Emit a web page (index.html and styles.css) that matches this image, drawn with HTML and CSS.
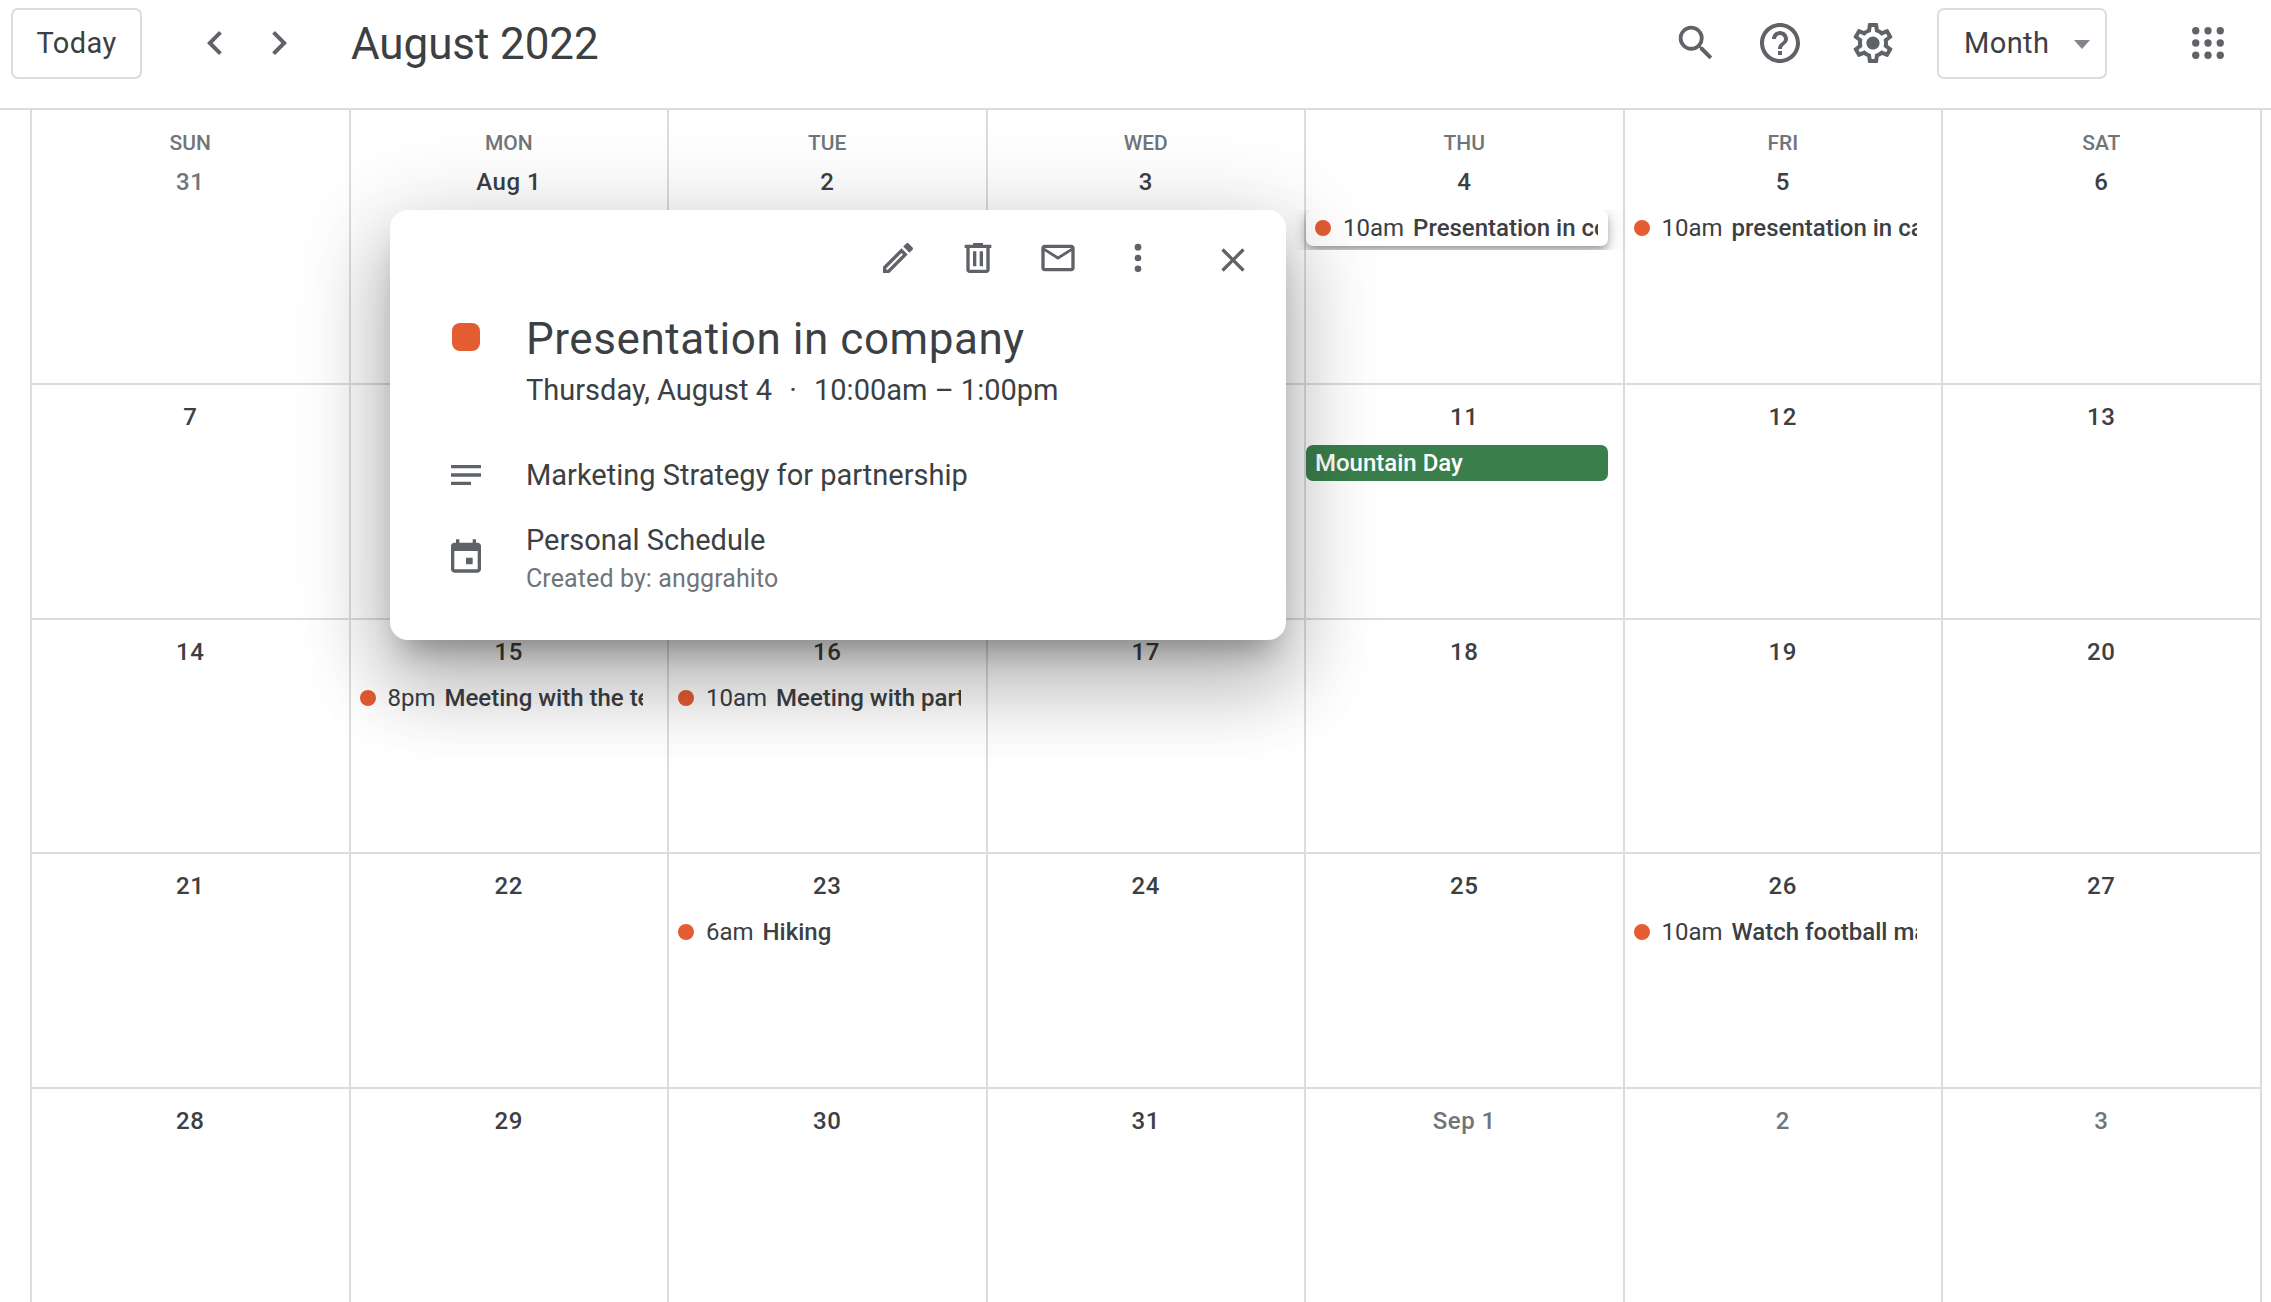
FILE: index.html
```html
<!DOCTYPE html>
<html lang="en">
<head>
    <meta charset="UTF-8">
    <title>August 2022</title>
    <link rel="stylesheet" href="styles.css">
</head>
<body>

    <header class="topbar">
        <button class="btn btn-today">Today</button>
        <div class="nav-arrows">
            <svg class="icon" viewBox="0 0 24 24"><path d="M15.41 7.41L14 6l-6 6 6 6 1.41-1.41L10.83 12z"/></svg>
            <svg class="icon" viewBox="0 0 24 24"><path d="M10 6L8.59 7.41 13.17 12l-4.58 4.59L10 18l6-6z"/></svg>
        </div>
        <h1 class="title">August 2022</h1>
        <div class="topbar-right">
            <svg class="icon icon-search" viewBox="0 0 24 24"><path d="M15.5 14h-.79l-.28-.27A6.471 6.471 0 0 0 16 9.5 6.5 6.5 0 1 0 9.5 16c1.61 0 3.09-.59 4.23-1.57l.27.28v.79l5 4.99L20.49 19l-4.99-5zm-6 0C7.01 14 5 11.99 5 9.5S7.01 5 9.5 5 14 7.01 14 9.5 11.99 14 9.5 14z"/></svg>
            <svg class="icon icon-help" viewBox="0 0 24 24"><path d="M11 18h2v-2h-2v2zm1-16C6.48 2 2 6.48 2 12s4.48 10 10 10 10-4.48 10-10S17.52 2 12 2zm0 18c-4.41 0-8-3.59-8-8s3.59-8 8-8 8 3.59 8 8-3.59 8-8 8zm0-14c-2.21 0-4 1.79-4 4h2c0-1.1.9-2 2-2s2 .9 2 2c0 2-3 1.75-3 5h2c0-2.25 3-2.5 3-5 0-2.21-1.79-4-4-4z"/></svg>
            <svg class="icon icon-gear" viewBox="0 0 24 24"><path d="M19.43 12.98c.04-.32.07-.64.07-.98 0-.34-.03-.66-.07-.98l2.11-1.65c.19-.15.24-.42.12-.64l-2-3.46c-.09-.16-.26-.25-.44-.25-.06 0-.12.01-.17.03l-2.49 1c-.52-.4-1.08-.73-1.69-.98l-.38-2.65C14.46 2.18 14.25 2 14 2h-4c-.25 0-.46.18-.49.42l-.38 2.65c-.61.25-1.17.59-1.69.98l-2.49-1c-.06-.02-.12-.03-.18-.03-.17 0-.34.09-.43.25l-2 3.46c-.13.22-.07.49.12.64l2.11 1.65c-.04.32-.07.65-.07.98 0 .33.03.66.07.98l-2.11 1.65c-.19.15-.24.42-.12.64l2 3.46c.09.16.26.25.44.25.06 0 .12-.01.17-.03l2.49-1c.52.4 1.08.73 1.69.98l.38 2.65c.03.24.24.42.49.42h4c.25 0 .46-.18.49-.42l.38-2.65c.61-.25 1.17-.59 1.69-.98l2.49 1c.06.02.12.03.18.03.17 0 .34-.09.43-.25l2-3.46c.12-.22.07-.49-.12-.64l-2.11-1.65zm-1.98-1.71c.04.31.05.52.05.73 0 .21-.02.43-.05.73l-.14 1.13.89.7 1.08.84-.7 1.21-1.27-.51-1.04-.42-.9.68c-.43.32-.84.56-1.25.73l-1.06.43-.16 1.13-.2 1.35h-1.4l-.19-1.35-.16-1.13-1.06-.43c-.43-.18-.83-.41-1.23-.71l-.91-.7-1.06.43-1.27.51-.7-1.21 1.08-.84.89-.7-.14-1.13c-.03-.31-.05-.54-.05-.74s.02-.43.05-.73l.14-1.13-.89-.7-1.08-.84.7-1.21 1.27.51 1.04.42.9-.68c.43-.32.84-.56 1.25-.73l1.06-.43.16-1.13.2-1.35h1.39l.19 1.35.16 1.13 1.06.43c.43.18.83.41 1.23.71l.91.7 1.06-.43 1.27-.51.7 1.21-1.07.85-.89.7.14 1.13zM12 8.7c-1.82 0-3.3 1.48-3.3 3.3s1.48 3.3 3.3 3.3 3.3-1.48 3.3-3.3-1.48-3.3-3.3-3.3z"/></svg>
            <button class="btn btn-month">Month <span class="caret"></span></button>
            <svg class="icon icon-apps" viewBox="0 0 24 24"><circle cx="5" cy="5" r="2.1"/><circle cx="12" cy="5" r="2.1"/><circle cx="19" cy="5" r="2.1"/><circle cx="5" cy="12" r="2.1"/><circle cx="12" cy="12" r="2.1"/><circle cx="19" cy="12" r="2.1"/><circle cx="5" cy="19" r="2.1"/><circle cx="12" cy="19" r="2.1"/><circle cx="19" cy="19" r="2.1"/></svg>
        </div>
    </header>

    <main class="month">
        <!-- week 1 -->
        <div class="cell cell-first"><div class="dow">SUN</div><div class="date muted">31</div></div>
        <div class="cell cell-first"><div class="dow">MON</div><div class="date">Aug 1</div></div>
        <div class="cell cell-first"><div class="dow">TUE</div><div class="date">2</div></div>
        <div class="cell cell-first"><div class="dow">WED</div><div class="date">3</div></div>
        <div class="cell cell-first"><div class="dow">THU</div><div class="date">4</div>
            <div class="event event-active"><span class="dot"></span><span class="time">10am</span><b>Presentation in company</b></div>
        </div>
        <div class="cell cell-first"><div class="dow">FRI</div><div class="date">5</div>
            <div class="event"><span class="dot"></span><span class="time">10am</span><b>presentation in cafe</b></div>
        </div>
        <div class="cell cell-first"><div class="dow">SAT</div><div class="date">6</div></div>

        <!-- week 2 -->
        <div class="cell"><div class="date">7</div></div>
        <div class="cell"><div class="date">8</div></div>
        <div class="cell"><div class="date">9</div></div>
        <div class="cell"><div class="date">10</div></div>
        <div class="cell"><div class="date">11</div>
            <div class="event event-holiday">Mountain Day</div>
        </div>
        <div class="cell"><div class="date">12</div></div>
        <div class="cell"><div class="date">13</div></div>

        <!-- week 3 -->
        <div class="cell"><div class="date">14</div></div>
        <div class="cell"><div class="date">15</div>
            <div class="event"><span class="dot"></span><span class="time">8pm</span><b>Meeting with the team</b></div>
        </div>
        <div class="cell"><div class="date">16</div>
            <div class="event"><span class="dot"></span><span class="time">10am</span><b>Meeting with partner</b></div>
        </div>
        <div class="cell"><div class="date">17</div></div>
        <div class="cell"><div class="date">18</div></div>
        <div class="cell"><div class="date">19</div></div>
        <div class="cell"><div class="date">20</div></div>

        <!-- week 4 -->
        <div class="cell"><div class="date">21</div></div>
        <div class="cell"><div class="date">22</div></div>
        <div class="cell"><div class="date">23</div>
            <div class="event"><span class="dot"></span><span class="time">6am</span><b>Hiking</b></div>
        </div>
        <div class="cell"><div class="date">24</div></div>
        <div class="cell"><div class="date">25</div></div>
        <div class="cell"><div class="date">26</div>
            <div class="event"><span class="dot"></span><span class="time">10am</span><b>Watch football match</b></div>
        </div>
        <div class="cell"><div class="date">27</div></div>

        <!-- week 5 -->
        <div class="cell cell-last"><div class="date">28</div></div>
        <div class="cell cell-last"><div class="date">29</div></div>
        <div class="cell cell-last"><div class="date">30</div></div>
        <div class="cell cell-last"><div class="date">31</div></div>
        <div class="cell cell-last"><div class="date muted">Sep 1</div></div>
        <div class="cell cell-last"><div class="date muted">2</div></div>
        <div class="cell cell-last"><div class="date muted">3</div></div>
    </main>

    <section class="popup">
        <div class="popup-actions">
            <svg class="icon" viewBox="0 0 24 24"><path d="M3 17.25V21h3.75L17.81 9.94l-3.75-3.75L3 17.25zM5.92 19H5v-.92l9.06-9.06.92.92L5.92 19zM20.71 5.63l-2.34-2.34c-.2-.2-.45-.29-.71-.29s-.51.1-.7.29l-1.83 1.83 3.75 3.75 1.83-1.83c.39-.39.39-1.02 0-1.41z"/></svg>
            <svg class="icon" viewBox="0 0 24 24"><path d="M15 4V3H9v1H4v2h1v13c0 1.1.9 2 2 2h10c1.1 0 2-.9 2-2V6h1V4h-5zm2 15H7V6h10v13zM9 8h2v9H9zm4 0h2v9h-2z"/></svg>
            <svg class="icon" viewBox="0 0 24 24"><path d="M22 6c0-1.1-.9-2-2-2H4c-1.1 0-2 .9-2 2v12c0 1.1.9 2 2 2h16c1.1 0 2-.9 2-2V6zm-2 0l-8 5-8-5h16zm0 12H4V8l8 5 8-5v10z"/></svg>
            <svg class="icon" viewBox="0 0 24 24"><circle cx="12" cy="5.5" r="2"/><circle cx="12" cy="12" r="2"/><circle cx="12" cy="18.5" r="2"/></svg>
            <svg class="icon icon-close" viewBox="0 0 24 24"><path d="M19 6.41L17.59 5 12 10.59 6.41 5 5 6.41 10.59 12 5 17.59 6.41 19 12 13.41 17.59 19 19 17.59 13.41 12z"/></svg>
        </div>

        <div class="popup-row row-title">
            <div class="row-icon"><span class="swatch"></span></div>
            <div>
                <div class="popup-title">Presentation in company</div>
                <div class="popup-when">Thursday, August 4 <span class="sep">·</span> 10:00am – 1:00pm</div>
            </div>
        </div>

        <div class="popup-row row-notes">
            <div class="row-icon">
                <svg class="icon" viewBox="0 0 24 24"><path d="M3 18h12v-2H3v2zM3 6v2h18V6H3zm0 7h18v-2H3v2z"/></svg>
            </div>
            <div class="popup-text">Marketing Strategy for partnership</div>
        </div>

        <div class="popup-row row-calendar">
            <div class="row-icon">
                <svg class="icon" viewBox="0 0 24 24"><path d="M19 4h-1V2h-2v2H8V2H6v2H5c-1.1 0-2 .9-2 2v14c0 1.1.9 2 2 2h14c1.1 0 2-.9 2-2V6c0-1.1-.9-2-2-2zm0 16H5V9h14v11zM12 13h4v4h-4z"/></svg>
            </div>
            <div>
                <div class="popup-text">Personal Schedule</div>
                <div class="popup-small">Created by: anggrahito</div>
            </div>
        </div>
    </section>

</body>
</html>
```

FILE: styles.css
```css
* {
    box-sizing: border-box;
}
body {
    margin: 0;
    width: 2271px;
    height: 1302px;
    overflow: hidden;
    font-family: Roboto, "Liberation Sans", sans-serif;
    background-color: #fff;
    color: #3c4043;
}
.icon {
    display: block;
    width: 40px;
    height: 40px;
    fill: #5f6368;
    flex: none;
}

/* top bar */
.topbar {
    display: flex;
    align-items: center;
    height: 110px;
    padding: 0 0 22px 11px;
    border-bottom: 2px solid #dadce0;
}
.btn {
    height: 71px;
    border: 2px solid #dadce0;
    border-radius: 7px;
    background: #fff;
    color: #3c4043;
    font-family: inherit;
    font-size: 29px;
    font-weight: 400;
    letter-spacing: .4px;
}
.btn-today {
    width: 131px;
}
.nav-arrows {
    display: flex;
    gap: 16px;
    margin-left: 49px;
}
.nav-arrows .icon {
    width: 48px;
    height: 48px;
}
.title {
    margin: 2px 0 0 48px;
    font-size: 44px;
    font-weight: 400;
    letter-spacing: -.1px;
    color: #3c4043;
}
.topbar-right {
    display: flex;
    align-items: center;
    margin-left: auto;
    padding-right: 42px;
}
.icon-search {
    width: 46px;
    height: 46px;
}
.icon-help {
    width: 48px;
    height: 48px;
    margin-left: 37px;
}
.icon-gear {
    width: 48px;
    height: 48px;
    margin-left: 45px;
}
.btn-month {
    display: flex;
    align-items: center;
    width: 170px;
    margin-left: 40px;
    padding-left: 25px;
}
.caret {
    width: 0;
    height: 0;
    margin-left: 25px;
    margin-top: 3px;
    border-left: 8px solid transparent;
    border-right: 8px solid transparent;
    border-top: 9px solid #80868b;
}
.icon-apps {
    width: 42px;
    height: 42px;
    margin-left: 80px;
}

/* month grid */
.month {
    display: grid;
    grid-template-columns: repeat(7, 318.5px);
    grid-template-rows: 275px 235px 234px 235px 215px;
    margin-left: 30px;
    border-right: 2px solid #dadce0;
    width: 2232px;
}
.cell {
    border-left: 2px solid #dadce0;
    border-bottom: 2px solid #dadce0;
    padding-top: 18px;
    text-align: center;
    min-width: 0;
}
.cell-first {
    padding-top: 21px;
}
.cell-first .dow + .date {
    margin-top: 7px;
}
.cell-last {
    border-bottom: 0;
}
.dow {
    height: 30px;
    font-size: 21px;
    line-height: 24px;
    font-weight: 500;
    color: #70757a;
}
.date {
    height: 28px;
    font-size: 24px;
    line-height: 28px;
    font-weight: 500;
    letter-spacing: .5px;
    color: #3c4043;
}
.date.muted {
    color: #70757a;
}
.event {
    display: flex;
    align-items: center;
    height: 36px;
    width: 302px;
    margin-top: 14px;
    padding: 0 10px 0 9px;
    border-radius: 7px;
    overflow: hidden;
    white-space: nowrap;
    font-size: 24px;
    text-align: left;
    color: #3c4043;
}
.event b {
    font-weight: 500;
    overflow: hidden;
}
.dot {
    width: 16px;
    height: 16px;
    margin-right: 12px;
    border-radius: 50%;
    background-color: #e45c31;
    flex: none;
}
.time {
    margin-right: 9px;
    flex: none;
}
.event-active {
    background-color: #fff;
    box-shadow: 0 4px 7px -1px rgba(0, 0, 0, .25), 0 8px 14px rgba(0, 0, 0, .14), 0 1px 26px rgba(0, 0, 0, .12);
    clip-path: inset(0 -40px -4px -40px);
}
.event-holiday {
    background-color: #3a7f4b;
    color: #fff;
    font-weight: 500;
}

/* event popup */
.popup {
    position: absolute;
    left: 390px;
    top: 210px;
    width: 896px;
    height: 430px;
    padding: 28px 0 0 0;
    background-color: #fff;
    border-radius: 18px;
    box-shadow: 0 48px 76px 6px rgba(0, 0, 0, .18), 0 18px 92px 16px rgba(0, 0, 0, .14), 0 22px 30px -14px rgba(0, 0, 0, .3);
}
.popup-actions {
    display: flex;
    justify-content: flex-end;
    gap: 40px;
    padding-right: 33px;
}
.icon-close {
    margin-left: 15px;
    margin-top: 2px;
}
.popup-row {
    display: grid;
    grid-template-columns: 136px 1fr;
    align-items: center;
}
.row-icon {
    display: flex;
    justify-content: center;
    padding-left: 16px;
}
.swatch {
    display: block;
    width: 28px;
    height: 28px;
    border-radius: 8px;
    background-color: #e45c31;
}
.row-title {
    align-items: start;
    margin-top: 34px;
}
.row-title .row-icon {
    padding-top: 9px;
}
.popup-title {
    font-size: 44px;
    line-height: 50px;
    letter-spacing: .55px;
    color: #3c4043;
}
.popup-when {
    margin-top: 10px;
    font-size: 29px;
    line-height: 32px;
    color: #3c4043;
}
.sep {
    margin: 0 10px;
}
.row-notes {
    margin-top: 49px;
}
.popup-text {
    font-size: 29px;
    line-height: 36px;
    color: #3c4043;
}
.row-calendar {
    margin-top: 27px;
}
.row-calendar .row-icon {
    margin-bottom: 5px;
}
.popup-small {
    margin-top: 6px;
    font-size: 25px;
    line-height: 30px;
    letter-spacing: .1px;
    color: #70757a;
}
```
